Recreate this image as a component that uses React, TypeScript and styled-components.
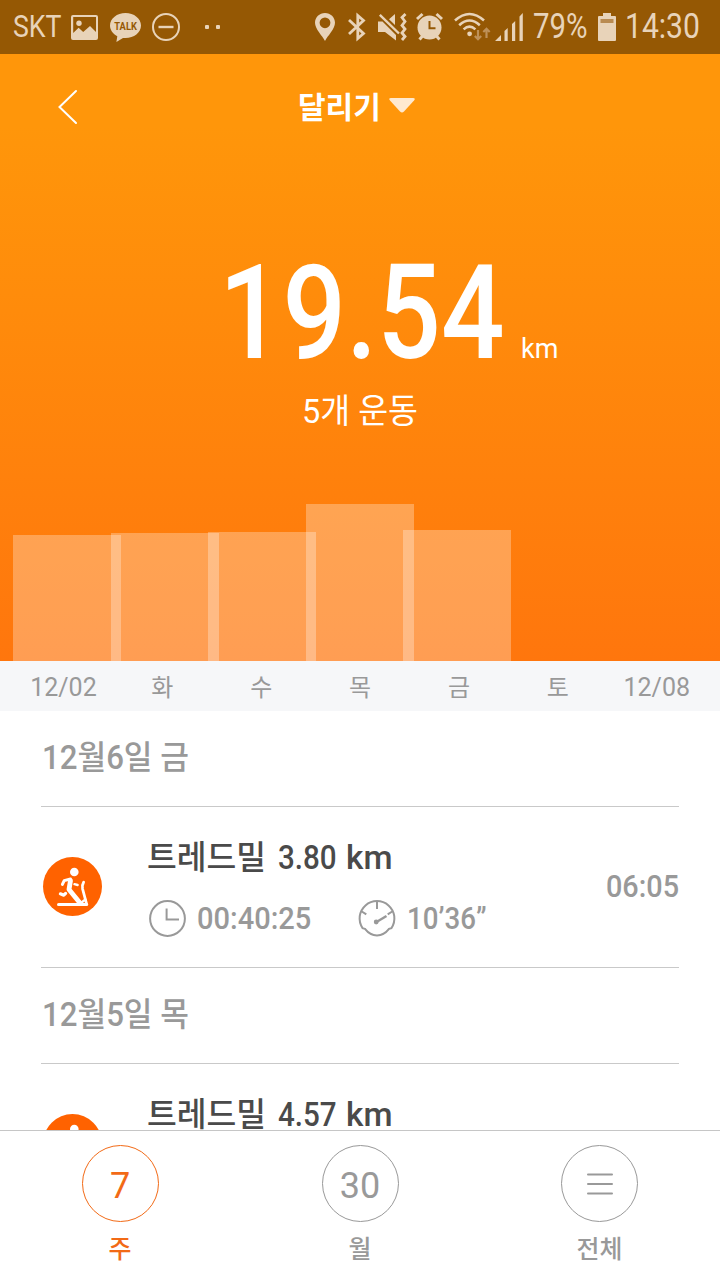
import React from 'react';
import styled, { createGlobalStyle } from 'styled-components';

const GlobalStyle = createGlobalStyle`
    * {
        box-sizing: border-box;
    }

    body {
        margin: 0;
        background: #fff;
        font-family: Roboto, 'Noto Sans CJK KR', sans-serif;
    }
`;

const GREY = '#999';
const ORANGE = '#f26a16';
const STATUS = '#e8d3b9';

interface ITextProps {
    $width: number;
    $size: number;
    $weight?: number;
    $stretch?: number;
    $color?: string;
    $left?: number;
}

// $width is the drawn width, after the horizontal squeeze
const Text = styled.span<ITextProps>`
    flex: none;
    display: block;
    width: ${({ $width }) => $width}px;
    margin-left: ${({ $left = 0 }) => $left}px;
    font-size: ${({ $size }) => $size}px;
    font-weight: ${({ $weight = 400 }) => $weight};
    line-height: 40px;
    color: ${({ $color = 'inherit' }) => $color};
    white-space: pre;
    transform: scaleX(${({ $stretch = 1 }) => $stretch});
    transform-origin: left center;
`;

const Screen = styled.div`
    display: flex;
    flex-direction: column;
    width: 720px;
    height: 1280px;
    overflow: hidden;
    background: #fff;
`;

const StatusBar = styled.div`
    display: flex;
    flex: none;
    align-items: center;
    height: 54px;
    padding-left: 13px;
    background: #955804;
    color: ${STATUS};
`;

const Glyph = styled.svg<{ $left?: number }>`
    flex: none;
    display: block;
    margin-left: ${({ $left = 0 }) => $left}px;
    overflow: visible;
`;

const Spacer = styled.div`
    flex: 1;
`;

const Hero = styled.div`
    display: flex;
    flex: none;
    flex-direction: column;
    height: 607px;
    background: linear-gradient(#ff960a 0%, #ff960a 12%, #ff760d 100%);
    color: #fff;
`;

const TitleBar = styled.div`
    display: flex;
    align-items: center;
    height: 106px;
    padding-left: 58px;
`;

const TitleText = styled(Text)`
    padding-top: 2px;
`;

const TitleCaret = styled(Glyph)`
    margin-bottom: 3px;
`;

const Total = styled.div`
    display: flex;
    align-items: baseline;
    height: 170px;
    padding: 87px 0 0 219px;
`;

const TotalValue = styled(Text)`
    line-height: 132px;
`;

const Subtitle = styled.div`
    display: flex;
    justify-content: center;
    padding-top: 61px;
`;

const Chart = styled.div`
    display: flex;
    flex: 1;
    align-items: flex-end;
    padding-left: 13px;
`;

const Bar = styled.div`
    flex: none;
    width: 108px;
    margin-right: -10.5px;
    background: rgba(255, 255, 255, 0.29);
`;

const Axis = styled.div`
    display: grid;
    flex: none;
    grid-template-columns: repeat(7, 98.9px);
    align-items: center;
    justify-items: center;
    height: 50px;
    padding: 4px 0 0 14px;
    background: #f6f7f9;
    color: ${GREY};
`;

const AxisLabel = styled.span<{ $size: number }>`
    font-size: ${({ $size }) => $size}px;
    line-height: 40px;
`;

const List = styled.div`
    flex: 1;
    min-height: 0;
    padding: 0 41px;
    overflow: hidden;
`;

const DateHeader = styled.div`
    display: flex;
    align-items: center;
    height: 96px;
    padding-bottom: 1px;
    border-bottom: 1px solid #c9c9c9;
    color: ${GREY};
`;

const Workout = styled.div`
    display: flex;
    align-items: center;
    height: 161px;
    padding: 0 0 2px 2px;
    border-bottom: 1px solid #c9c9c9;
`;

const WorkoutBody = styled.div`
    display: flex;
    flex: 1;
    flex-direction: column;
    gap: 21px;
    margin: 3px 0 0 46px;
`;

const Line = styled.div`
    display: flex;
    align-items: center;
    height: 40px;
    color: ${GREY};
`;

const TitleLine = styled(Line)`
    align-items: baseline;
    color: #4a4a4a;
`;

const TabBar = styled.div`
    display: grid;
    flex: none;
    grid-template-columns: 241px 239px 240px;
    height: 150px;
    border-top: 1px solid #c6c6c6;
    background: #fff;
`;

const Tab = styled.div<{ $active?: boolean }>`
    display: flex;
    flex-direction: column;
    align-items: center;
    padding: 14px 1px 0 0;
    color: ${({ $active }) => ($active ? ORANGE : GREY)};
`;

const TabCircle = styled.div`
    display: flex;
    align-items: center;
    justify-content: center;
    width: 77px;
    height: 77px;
    padding-top: 5px;
    border: 1px solid currentColor;
    border-radius: 50%;
    font-size: 36px;
`;

const TabLabel = styled.div`
    margin-top: 8px;
    font-size: 25px;
    font-weight: 500;
    line-height: 40px;
`;

const MenuIcon = styled.svg`
    margin-top: -5px;
`;

const TreadmillIcon = () => (
    <Glyph width="59" height="59" viewBox="0 0 59 59">
        <circle cx="29.5" cy="29.5" r="29.5" fill="#ff6200" />
        <circle cx="31.3" cy="15" r="4.3" fill="#fff" />
        <g
            fill="none"
            stroke="#fff"
            strokeLinecap="round"
            strokeLinejoin="round"
        >
            <path d="M15.6 47.5H43.6" strokeWidth="3.2" />
            <path d="M43.6 47L39.6 32Q38.8 28 40.6 25.2" strokeWidth="2.8" />
            <path d="M27.5 23.5L26 32.5L37 46" strokeWidth="4.8" />
            <path d="M27.5 22L21.2 23.6L19.4 27.4" strokeWidth="3" />
            <path d="M31.5 27.2L34.6 28" strokeWidth="2.4" />
            <path d="M17.4 36.8L20.8 38.2L22.6 36.4" strokeWidth="3.2" />
            <path d="M38 46L42.4 42.4" strokeWidth="2.4" />
        </g>
    </Glyph>
);

const ClockIcon = () => (
    <Glyph
        width="37"
        height="37"
        viewBox="0 0 37 37"
        $left={1}
        fill="none"
        stroke={GREY}
        strokeWidth="2"
    >
        <circle cx="18.5" cy="18.5" r="17.4" />
        <path d="M17.6 8.5V19.5H30" />
    </Glyph>
);

const PaceIcon = () => (
    <Glyph
        width="38"
        height="37"
        viewBox="0 0 38 37"
        $left={45}
        fill="none"
        stroke={GREY}
        strokeWidth="2"
    >
        <path d="M7 28.9L4.6 28.2A17.4 17.4 0 1 1 33.4 28.2L31 28.9Q26 35.4 19 35.4T7 28.9Z" />
        <path d="M19 2V9M3.8 11.5L8.3 14.4M34.2 11.5L29.7 14.4" />
        <path d="M18.5 22L28.5 16" strokeWidth="2.4" />
        <circle cx="18.2" cy="22" r="2.4" fill={GREY} stroke="none" />
    </Glyph>
);

const StatusIcons = () => (
    <>
        <Glyph width="27" height="25" viewBox="0 0 27 25" $left={10}>
            <path
                fill={STATUS}
                fillRule="evenodd"
                d="M2 0H25Q27 0 27 2V23Q27 25 25 25H2Q0 25 0 23V2Q0 0 2 0ZM2.2 2V18L7.6 12.8L12.2 17L19 11L25 17V2Z"
            />
            <circle cx="8" cy="8.2" r="2.7" fill={STATUS} />
        </Glyph>
        <Glyph width="31" height="29" viewBox="0 0 31 29" $left={12}>
            <path
                fill={STATUS}
                d="M15.5 0C24 0 31 5.5 31 12.5S24 25 15.5 25L13 24.9L6.4 29L7.3 23.2C3 21 0 17.2 0 12.5C0 5.5 7 0 15.5 0Z"
            />
            <text
                x="4.3"
                y="16.6"
                fontSize="11"
                fontWeight="700"
                fill="#955804"
                textLength="22.6"
                lengthAdjust="spacingAndGlyphs"
            >
                TALK
            </text>
        </Glyph>
        <Glyph
            width="28"
            height="28"
            viewBox="0 0 28 28"
            $left={11}
            fill="none"
            stroke={STATUS}
            strokeWidth="2"
        >
            <circle cx="14" cy="14" r="13" />
            <path d="M6.5 14H21.5" strokeWidth="2.4" />
        </Glyph>
        <Glyph width="16" height="4" viewBox="0 0 16 4" $left={25} fill={STATUS}>
            <rect width="4" height="4" rx="1" />
            <rect x="11" width="4" height="4" rx="1" />
        </Glyph>
    </>
);

const SystemIcons = () => (
    <>
        <Glyph width="20" height="28" viewBox="0 0 20 28">
            <path
                fill={STATUS}
                fillRule="evenodd"
                d="M10 0C15.6 0 20 4.3 20 9.8C20 16 12.5 23 10 28C7.5 23 0 16 0 9.8C0 4.3 4.4 0 10 0ZM10 4.4A5.4 5.4 0 1 0 10 15.2A5.4 5.4 0 1 0 10 4.4Z"
            />
        </Glyph>
        <Glyph width="18" height="28" viewBox="0 0 18 28" $left={13}>
            <path
                fill="none"
                stroke={STATUS}
                strokeWidth="2.8"
                d="M1 7L15.5 20.5L9.8 25.5V2.5L15.5 7.5L1 21"
            />
        </Glyph>
        <Glyph width="29" height="28" viewBox="0 0 29 28" $left={12}>
            <path
                fill={STATUS}
                d="M0 8.5H4.5L18 22V27.5L7 19H0ZM11 6.3L17 1V12Z"
            />
            <path stroke={STATUS} strokeWidth="2.4" d="M1.8 1.8L21 20.5" />
            <path
                fill="none"
                stroke={STATUS}
                strokeWidth="2.8"
                d="M27.5 1L24 4.5L27 8.5L24 12.5L27 16L24 20L27 23.5L24 27"
            />
        </Glyph>
        <Glyph width="27" height="28" viewBox="0 0 27 28" $left={9}>
            <circle cx="13.5" cy="14.5" r="12" fill={STATUS} />
            <path
                fill="none"
                stroke={STATUS}
                strokeWidth="3"
                d="M1 6L6.5 1M26 6L20.5 1M3.5 26.5L7 22.5M23.5 26.5L20 22.5"
            />
            <path
                fill="none"
                stroke="#955804"
                strokeWidth="2"
                d="M13.5 8V15.2H19.5"
            />
        </Glyph>
        <Glyph width="38" height="28" viewBox="0 0 38 28" $left={11}>
            <g fill="none" stroke={STATUS} strokeWidth="2.6">
                <path d="M1 7.5Q15.5 -5.5 30 7.5" />
                <path d="M5.2 12.2Q15.5 2.8 25.8 12.2" />
                <path d="M9.6 16.4Q15.5 11 21.4 16.4" />
            </g>
            <circle cx="15.6" cy="20.8" r="2.4" fill={STATUS} />
            <path
                fill="none"
                stroke="#be9159"
                strokeWidth="2.2"
                d="M24 17V26M20.8 23L24 26.2L27.2 23M32.5 25V16M29.3 19L32.5 15.8L35.7 19"
            />
        </Glyph>
        <Glyph
            width="29"
            height="28"
            viewBox="0 0 29 28"
            $left={3}
            fill={STATUS}
        >
            <path d="M0 28L6 22V28ZM9.5 28V18L12.7 15V28ZM17 28V11L20.2 8V28ZM24.5 28V3.5L27.8 0V28Z" />
        </Glyph>
    </>
);

const DISTANCES = [
    { label: '12/02', height: 126 },
    { label: '화', height: 128 },
    { label: '수', height: 129 },
    { label: '목', height: 157 },
    { label: '금', height: 131 },
    { label: '토', height: 0 },
    { label: '12/08', height: 0 },
];

const WORKOUTS = [
    {
        date: '12월6일 금',
        distance: '3.80',
        duration: '00:40:25',
        pace: '10’36”',
        time: '06:05',
    },
    {
        date: '12월5일 목',
        distance: '4.57',
    },
];

interface IWorkoutProps {
    date: string;
    distance: string;
    duration?: string;
    pace?: string;
    time?: string;
}

const WorkoutRow: React.FC<IWorkoutProps> = ({
    date,
    distance,
    duration,
    pace,
    time,
}) => (
    <>
        <DateHeader>
            <Text
                $width={147}
                $size={33}
                $stretch={0.945}
                $weight={500}
                $left={1}
            >
                {date}
            </Text>
        </DateHeader>
        <Workout>
            <TreadmillIcon />
            <WorkoutBody>
                <TitleLine>
                    <Text
                        $width={131}
                        $size={33}
                        $stretch={0.98}
                        $weight={500}
                        $left={-1}
                    >
                        트레드밀
                    </Text>
                    <Text $width={68} $size={34} $stretch={0.87} $weight={500}>
                        {distance}
                    </Text>
                    <Text $width={46} $size={34} $stretch={0.98} $weight={500}>
                        km
                    </Text>
                </TitleLine>
                <Line>
                    {duration && (
                        <>
                            <ClockIcon />
                            <Text
                                $width={116}
                                $size={32}
                                $stretch={0.907}
                                $weight={500}
                                $left={11}
                            >
                                {duration}
                            </Text>
                        </>
                    )}
                    {pace && (
                        <>
                            <PaceIcon />
                            <Text
                                $width={80}
                                $size={32}
                                $stretch={0.865}
                                $weight={500}
                                $left={11}
                            >
                                {pace}
                            </Text>
                        </>
                    )}
                </Line>
            </WorkoutBody>
            {time && (
                <Text
                    $width={73}
                    $size={32}
                    $stretch={0.9}
                    $weight={500}
                    $color={GREY}
                >
                    {time}
                </Text>
            )}
        </Workout>
    </>
);

export default function App() {
    return (
        <Screen>
            <GlobalStyle />
            <StatusBar>
                <Text $width={48} $size={31} $stretch={0.86}>
                    SKT
                </Text>
                <StatusIcons />
                <Spacer />
                <SystemIcons />
                <Text $width={55} $size={35} $stretch={0.84} $left={9}>
                    79%
                </Text>
                <Glyph width="18" height="28" viewBox="0 0 18 28" $left={10}>
                    <path
                        fill={STATUS}
                        d="M5 0H13V3H17Q18 3 18 4V27Q18 28 17 28H1Q0 28 0 27V4Q0 3 1 3H5Z"
                    />
                    <rect x="2.5" y="6" width="13" height="4" fill="#b98b52" />
                </Glyph>
                <Text $width={95} $size={35} $stretch={0.86} $left={9}>
                    14:30
                </Text>
            </StatusBar>
            <Hero>
                <TitleBar>
                    <Glyph width="20" height="34" viewBox="0 0 20 34">
                        <path
                            fill="none"
                            stroke="#fff"
                            strokeWidth="2"
                            strokeLinecap="round"
                            d="M18 1L1.5 17L18 33"
                        />
                    </Glyph>
                    <TitleText $width={84} $size={30} $weight={700} $left={220}>
                        달리기
                    </TitleText>
                    <TitleCaret
                        width="26"
                        height="15"
                        viewBox="0 0 26 15"
                        $left={7}
                    >
                        <path
                            fill="#ffe9cf"
                            d="M2 0H24Q27 0 25 2.5L15 13.5Q13 15.5 11 13.5L1 2.5Q-1 0 2 0Z"
                        />
                    </TitleCaret>
                </TitleBar>
                <Total>
                    <TotalValue
                        $width={302}
                        $size={132}
                        $stretch={0.848}
                        $weight={500}
                    >
                        19.54
                    </TotalValue>
                    <Text $width={38} $size={27}>
                        km
                    </Text>
                </Total>
                <Subtitle>
                    <Text $width={117} $size={34} $stretch={0.955}>
                        5개 운동
                    </Text>
                </Subtitle>
                <Chart>
                    {DISTANCES.map(({ label, height }) => (
                        <Bar key={label} style={{ height }} />
                    ))}
                </Chart>
            </Hero>
            <Axis>
                {DISTANCES.map(({ label }) => (
                    <AxisLabel key={label} $size={label.length > 1 ? 25 : 24}>
                        {label}
                    </AxisLabel>
                ))}
            </Axis>
            <List>
                {WORKOUTS.map((workout) => (
                    <WorkoutRow key={workout.date} {...workout} />
                ))}
            </List>
            <TabBar>
                <Tab $active>
                    <TabCircle>7</TabCircle>
                    <TabLabel>주</TabLabel>
                </Tab>
                <Tab>
                    <TabCircle>30</TabCircle>
                    <TabLabel>월</TabLabel>
                </Tab>
                <Tab>
                    <TabCircle>
                        <MenuIcon width="26" height="24" viewBox="0 0 26 24">
                            <path
                                stroke={GREY}
                                strokeWidth="2"
                                strokeLinecap="round"
                                d="M1 2.5H25M1 12H25M1 21.5H25"
                            />
                        </MenuIcon>
                    </TabCircle>
                    <TabLabel>전체</TabLabel>
                </Tab>
            </TabBar>
        </Screen>
    );
}
